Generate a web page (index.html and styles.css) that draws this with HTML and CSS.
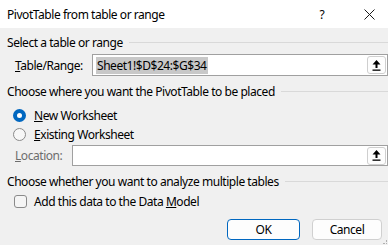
FILE: index.html
```html
<!DOCTYPE html>
<html lang="en">
<head>
    <meta charset="UTF-8">
    <title>PivotTable from table or range</title>
    <link rel="stylesheet" href="styles.css">
</head>
<body>

<div class="dialog">
    <div class="titlebar">
        <span class="title">PivotTable from table or range</span>
        <span class="help">?</span>
        <span class="close">
            <svg width="11" height="11" viewBox="0 0 11 11"><path d="M0.5 0.5 L10.5 10.5 M10.5 0.5 L0.5 10.5" stroke="#1a1a1a" stroke-width="1"/></svg>
        </span>
    </div>

    <div class="content">
        <div class="section-title"><span>Select a table or range</span><div class="rule"></div></div>

        <div class="field-row range-row">
            <label class="label"><u>T</u>able/Range:</label>
            <div class="textbox">
                <span class="selected">Sheet1!$D$24:$G$34</span>
                <button class="pick">
                    <svg width="9" height="11" viewBox="0 0 9 11"><path d="M4.5 0 L0.5 4.5 L3.5 4.5 L3.5 8 L5.5 8 L5.5 4.5 L8.5 4.5 Z" fill="#000"/><rect x="0.5" y="9.5" width="8" height="1.3" fill="#000"/></svg>
                </button>
            </div>
        </div>

        <div class="section-title second"><span>Choose where you want the PivotTable to be placed</span><div class="rule"></div></div>

        <div class="option first-option">
            <span class="radio checked"></span>
            <span><u>N</u>ew Worksheet</span>
        </div>
        <div class="option">
            <span class="radio"></span>
            <span><u>E</u>xisting Worksheet</span>
        </div>

        <div class="field-row location-row">
            <label class="label disabled"><u>L</u>ocation:</label>
            <div class="textbox">
                <span></span>
                <button class="pick">
                    <svg width="9" height="11" viewBox="0 0 9 11"><path d="M4.5 0 L0.5 4.5 L3.5 4.5 L3.5 8 L5.5 8 L5.5 4.5 L8.5 4.5 Z" fill="#000"/><rect x="0.5" y="9.5" width="8" height="1.3" fill="#000"/></svg>
                </button>
            </div>
        </div>

        <div class="section-title third"><span>Choose whether you want to analyze multiple tables</span><div class="rule"></div></div>

        <div class="option check-option">
            <span class="checkbox"></span>
            <span>Add this data to the Data <u>M</u>odel</span>
        </div>

        <div class="buttons">
            <button class="btn default">OK</button>
            <button class="btn">Cancel</button>
        </div>
    </div>
    <div class="grip"></div>
</div>

</body>
</html>
```

FILE: styles.css
```css
body {
    margin: 0;
    padding: 0;
    font-family: "Segoe UI", "Noto Sans", Arial, sans-serif;
    font-size: 12px;
    letter-spacing: -0.45px;
    color: #000;
    background-color: #f0f0f0;
}
.dialog {
    width: 388px;
    height: 245px;
    position: relative;
    background-color: #f0f0f0;
    overflow: hidden;
}
.titlebar {
    height: 28px;
    background-color: #fff;
    display: flex;
    align-items: center;
    padding-left: 7px;
}
.title {
    flex-grow: 1;
    font-size: 12px;
}
.help {
    width: 10px;
    margin-right: 37px;
    text-align: center;
}
.close {
    display: flex;
    margin-right: 13px;
}
.content {
    padding-left: 7px;
}
.section-title {
    height: 16px;
    margin-top: 6px;
    display: flex;
    align-items: center;
    white-space: nowrap;
}
.section-title.second {
    margin-top: 7px;
}
.section-title.third {
    margin-top: 7px;
}
.rule {
    flex-grow: 1;
    height: 1px;
    background-color: #d9d9d9;
    margin-left: 6px;
}
.field-row {
    display: flex;
    align-items: center;
    padding-left: 8px;
}
.range-row {
    margin-top: 4px;
    height: 22px;
}
.location-row {
    margin-top: 2px;
    height: 21px;
}
.label {
    width: 77px;
}
.location-row .label {
    width: 57px;
}
.label.disabled {
    color: #6d6d6d;
}
.textbox {
    flex-grow: 1;
    height: 100%;
    box-sizing: border-box;
    border: 1px solid #a0a0a0;
    background-color: #fff;
    display: flex;
    align-items: center;
    justify-content: space-between;
    padding-left: 3px;
    padding-right: 1px;
}
.selected {
    background-color: #c8c8c8;
    padding: 1px 1px;
    line-height: 15px;
}
.pick {
    width: 19px;
    height: 18px;
    padding: 0;
    border: 1px solid #cfcfcf;
    border-radius: 3px;
    background-color: #fdfdfd;
    display: flex;
    align-items: center;
    justify-content: center;
}
.option {
    display: flex;
    align-items: center;
    height: 18px;
    padding-left: 6px;
    margin-top: 1px;
}
.first-option {
    margin-top: 7px;
}
.radio {
    width: 13px;
    height: 13px;
    box-sizing: border-box;
    border-radius: 50%;
    border: 1px solid #8a8a8a;
    background-color: #f7f7f7;
    margin-right: 8px;
}
.radio.checked {
    border: 4px solid #0067c0;
    background-color: #fff;
}
.check-option {
    margin-top: 3px;
    padding-left: 7px;
}
.checkbox {
    width: 13px;
    height: 13px;
    box-sizing: border-box;
    border: 1px solid #8a8a8a;
    border-radius: 3px;
    background-color: #f5f5f5;
    margin-right: 7px;
}
.buttons {
    display: flex;
    justify-content: flex-end;
    gap: 12px;
    margin-top: 9px;
    padding-right: 6px;
}
.btn {
    width: 73px;
    height: 21px;
    font-family: inherit;
    font-size: 12px;
    letter-spacing: -0.45px;
    color: #000;
    background-color: #fdfdfd;
    border: 1px solid #d0d0d0;
    border-radius: 4px;
    padding: 0;
}
.btn:last-child {
    width: 70px;
}
.btn.default {
    border-color: #0067c0;
}
.grip {
    position: absolute;
    right: 1px;
    bottom: 1px;
    width: 3px;
    height: 3px;
    border-right: 1px dotted #b0b0b0;
    border-bottom: 1px dotted #b0b0b0;
}
```
